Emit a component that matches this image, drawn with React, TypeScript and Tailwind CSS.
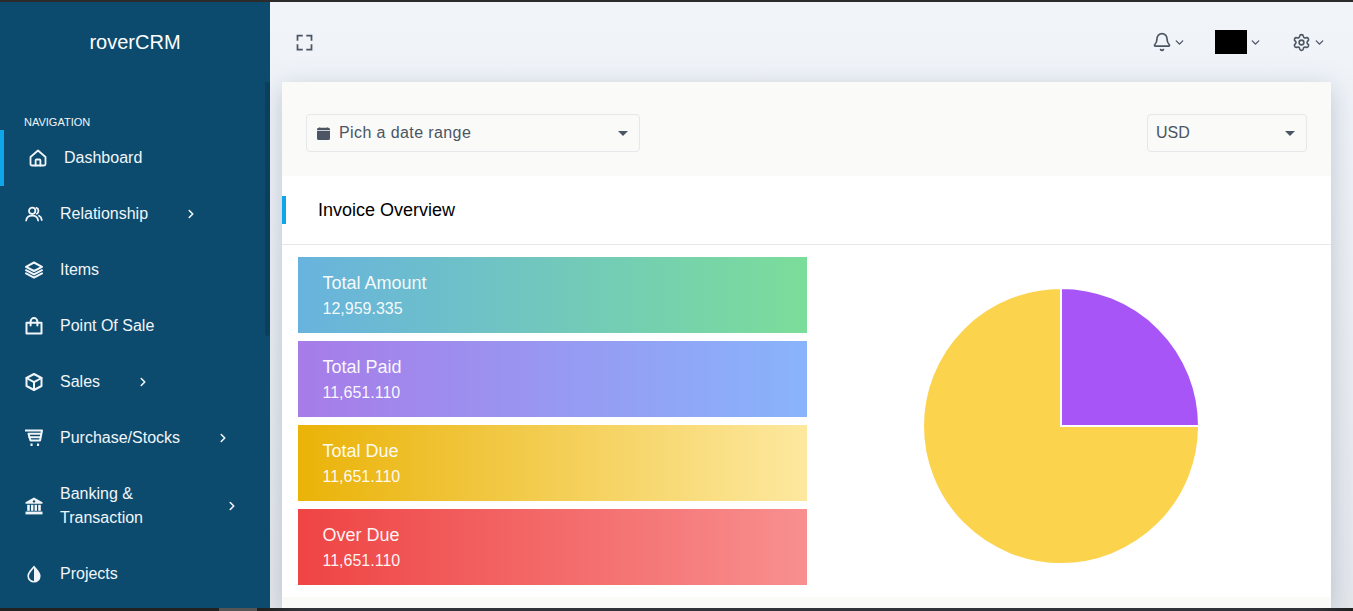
import type { ReactNode } from "react";
import { Bell, ChevronDown, ChevronRight, Settings } from "lucide-react";
import { BiFullscreen } from "react-icons/bi";
import { BsCalendarFill } from "react-icons/bs";

// Sidebar icons are hand drawn so the strokes line up with the reference
const line = {
  fill: "none",
  stroke: "currentColor",
  strokeWidth: 1.8,
  strokeLinecap: "round" as const,
  strokeLinejoin: "round" as const,
};

const HomeIcon = (
  <svg width="18" height="18" viewBox="0 0 18 18" {...line}>
    <path d="M1.5 8 L9 1.5 L16.5 8 V15 A1.5 1.5 0 0 1 15 16.5 H3 A1.5 1.5 0 0 1 1.5 15 Z" />
    <path d="M6.6 16.5 V11.5 A1 1 0 0 1 7.6 10.5 H10.4 A1 1 0 0 1 11.4 11.5 V16.5" />
  </svg>
);

const UsersIcon = (
  <svg width="18" height="18" viewBox="0 0 18 18" {...line}>
    <circle cx="7.2" cy="5.8" r="3.2" />
    <path d="M1.2 15.5 C1.5 12 3.7 10.6 7.2 10.6 C10.7 10.6 12.7 12 13.1 15.5" />
    <path d="M11.5 2.8 C14 3.6 14 8 11.8 8.8 M14 10.8 C15.8 11.6 16.5 13.2 16.8 15" />
  </svg>
);

const LayersIcon = (
  <svg width="18" height="18" viewBox="0 0 18 18" {...line} strokeWidth="2">
    <path d="M9 1.5 L17 5.8 L9 10 L1 5.8 Z" />
    <path d="M1 9.2 L9 13.4 L17 9.2" />
    <path d="M1 12.4 L9 16.6 L17 12.4" />
  </svg>
);

const BagIcon = (
  <svg width="18" height="18" viewBox="0 0 18 18" {...line} strokeWidth="2">
    <path d="M1.5 5.8 H16.5 V16.5 H1.5 Z" />
    <path d="M5.6 8.5 V4.5 A3.4 3.4 0 0 1 12.4 4.5 V8.5" />
  </svg>
);

const CubeIcon = (
  <svg width="18" height="18" viewBox="0 0 18 18" {...line} strokeWidth="2">
    <path d="M9 1 L16.5 5 V13 L9 17 L1.5 13 V5 Z" />
    <path d="M1.5 5 L9 9.2 L16.5 5 M9 9.2 V17" />
  </svg>
);

const CartIcon = (
  <svg width="18" height="18" viewBox="0 0 18 18" {...line} strokeWidth="2" strokeLinecap="square">
    <path d="M1 1.5 H17 L15 11.5 H5.5 L3.5 4.8 H15.8" />
    <path d="M4.5 8.2 H15.2" />
    <path d="M5.5 15.8 H7.6 M12 15.8 H14.1" strokeWidth="2.4" strokeLinecap="butt" />
  </svg>
);

const BankIcon = (
  <svg width="18" height="18" viewBox="0 0 18 18" fill="currentColor">
    <path d="M9 .5 L17.5 5.2 V6.8 H.5 V5.2 Z" />
    <circle cx="9" cy="4.4" r="1.2" fill="#0c4b6e" />
    <rect x="2.2" y="7.8" width="2.6" height="6" />
    <rect x="6" y="7.8" width="2.4" height="6" />
    <rect x="9.6" y="7.8" width="2.4" height="6" />
    <rect x="13.2" y="7.8" width="2.6" height="6" />
    <rect x=".5" y="14.6" width="17" height="2.8" />
  </svg>
);

const DropIcon = (
  <svg width="18" height="18" viewBox="0 0 18 18">
    <path d="M9 .5 C6.5 3.8 2.4 7.2 2.4 11 A6.6 6.6 0 0 0 15.6 11 C15.6 7.2 11.5 3.8 9 .5 Z" fill="currentColor" />
    <path d="M9 3 C7 5.8 4 8.4 4 11 A5 5 0 0 0 9 16 Z" fill="#0c4b6e" />
  </svg>
);

type NavItem = {
  label: ReactNode;
  icon: ReactNode;
  arrowClass?: string;
  rowClass?: string;
};

const navItems: NavItem[] = [
  { label: "Relationship", icon: UsersIcon, arrowClass: "left-[184px]" },
  { label: "Items", icon: LayersIcon },
  { label: "Point Of Sale", icon: BagIcon },
  { label: "Sales", icon: CubeIcon, arrowClass: "left-[136px]" },
  { label: "Purchase/Stocks", icon: CartIcon, arrowClass: "left-[216px]" },
  {
    label: (
      <>
        Banking &amp;
        <br />
        Transaction
      </>
    ),
    icon: BankIcon,
    arrowClass: "left-[225px]",
    rowClass: "h-[80px]",
  },
  { label: "Projects", icon: DropIcon },
];

const stats = [
  { title: "Total Amount", value: "12,959.335", bg: "from-[#68b3de] to-[#7bdd9a]" },
  { title: "Total Paid", value: "11,651.110", bg: "from-[#a77ce8] to-[#88b4fb]" },
  { title: "Total Due", value: "11,651.110", bg: "from-[#eab308] to-[#fde89f]" },
  { title: "Over Due", value: "11,651.110", bg: "from-[#ef4444] to-[#f88f8f]" },
];

function Caret() {
  return <span className="w-0 h-0 border-x-[5px] border-x-transparent border-t-[5px] border-t-[#4b5563]" />;
}

function Sidebar() {
  return (
    <aside className="relative w-[270px] shrink-0 bg-[#0c4b6e] text-[#f1f5f9] overflow-hidden">
      <div className="h-[80px] flex items-center justify-center text-[20px] text-white">roverCRM</div>
      {/* Scrollbar thumb */}
      <div className="absolute top-[80px] right-0 w-[5px] h-[254px] bg-[#0a3f5e] rounded-b" />

      <div className="pl-6 mt-[33px] text-[11px] leading-[14px] uppercase">Navigation</div>

      <nav className="mt-[1px]">
        <div className="h-[56px] flex items-center border-l-4 border-[#0ea5e9] pl-[25px]">
          {HomeIcon}
          <span className="ml-[17px] text-[16px]">Dashboard</span>
        </div>
        {navItems.map((item, i) => (
          <div key={i} className={`relative flex items-center pl-[25px] text-[16px] leading-[24px] ${item.rowClass ?? "h-[56px]"}`}>
            <span className="w-[18px] flex justify-center">{item.icon}</span>
            <span className="ml-[17px]">{item.label}</span>
            {item.arrowClass && <ChevronRight size={14} strokeWidth={2.75} className={`absolute ${item.arrowClass}`} />}
          </div>
        ))}
      </nav>
    </aside>
  );
}

function TopBar() {
  return (
    <header className="h-[80px] flex items-center pl-6 pr-[27px] text-[#4b5563]">
      <BiFullscreen size={21} />
      <div className="ml-auto flex items-center">
        <Bell size={20} strokeWidth={2} />
        <ChevronDown size={13} strokeWidth={2.5} className="ml-[1px]" />
        <div className="ml-[29px] w-8 h-6 bg-black" />
        <ChevronDown size={13} strokeWidth={2.5} className="ml-[2px]" />
        <Settings size={19} strokeWidth={2} className="ml-[30px]" />
        <ChevronDown size={13} strokeWidth={2.5} className="ml-[2px]" />
      </div>
    </header>
  );
}

function Filters() {
  return (
    <div className="h-[94px] bg-[#fafaf8] flex items-center justify-between px-6 pt-2 text-[#4b5563] text-[16px]">
      <div className="w-[334px] h-[38px] flex items-center border border-[#e5e7eb] rounded pl-[10px] pr-[11px]">
        <BsCalendarFill size={13} className="text-[#4b5563]" />
        <span className="ml-[9px] tracking-[0.025em]">Pich a date range</span>
        <span className="ml-auto flex">
          <Caret />
        </span>
      </div>
      <div className="w-[160px] h-[38px] flex items-center border border-[#e5e7eb] rounded pl-2 pr-[11px]">
        <span>USD</span>
        <span className="ml-auto flex">
          <Caret />
        </span>
      </div>
    </div>
  );
}

function PieChart() {
  return (
    <svg width="280" height="280" viewBox="0 0 280 280" className="block">
      <path d="M140 140 L140 2 A138 138 0 1 0 278 140 Z" fill="#fcd34d" stroke="#fff" strokeWidth="2" />
      <path d="M140 140 L140 2 A138 138 0 0 1 278 140 Z" fill="#a855f7" stroke="#fff" strokeWidth="2" />
    </svg>
  );
}

export default function App() {
  return (
    <div className="w-[1353px] h-[611px] overflow-hidden flex flex-col bg-[#222] font-['Liberation_Sans',Arial,sans-serif]">
      <div className="h-[2px] shrink-0 bg-[#2b2b2b]" />
      <div className="flex-1 min-h-0 flex">
        <Sidebar />
        <main className="flex-1 min-w-0 bg-gradient-to-b from-[#f1f5fa] to-[#e4e7ec]">
          <TopBar />
          <div className="mx-3 mr-[22px] h-[526px] bg-white shadow-[0_6px_24px_rgba(100,116,139,0.35)] flex flex-col">
            <Filters />
            <div className="h-[69px] shrink-0 border-b border-[#e5e7eb] flex items-start pt-[20px]">
              <div className="w-1 h-[28px] bg-[#0ea5e9]" />
              <h2 className="ml-[32px] text-[18px] leading-[28px] text-black">Invoice Overview</h2>
            </div>
            <div className="flex-1 min-h-0 flex pl-4 pt-3">
              <div className="w-[509px] flex flex-col gap-2">
                {stats.map((s) => (
                  <div key={s.title} className={`h-[76px] bg-linear-to-r/srgb ${s.bg} text-white/95 pl-[24.5px] pr-6 pt-[14px]`}>
                    <div className="text-[18px] leading-[25px]">{s.title}</div>
                    <div className="text-[16px] leading-[26px]">{s.value}</div>
                  </div>
                ))}
              </div>
              <div className="ml-[114px] mt-[29px]">
                <PieChart />
              </div>
            </div>
            <div className="h-[11px] shrink-0 bg-[#fafaf8]" />
          </div>
        </main>
      </div>
      <div className="h-[3px] shrink-0 flex">
        <div className="ml-[219px] w-[38px] bg-[#555]" />
      </div>
    </div>
  );
}
